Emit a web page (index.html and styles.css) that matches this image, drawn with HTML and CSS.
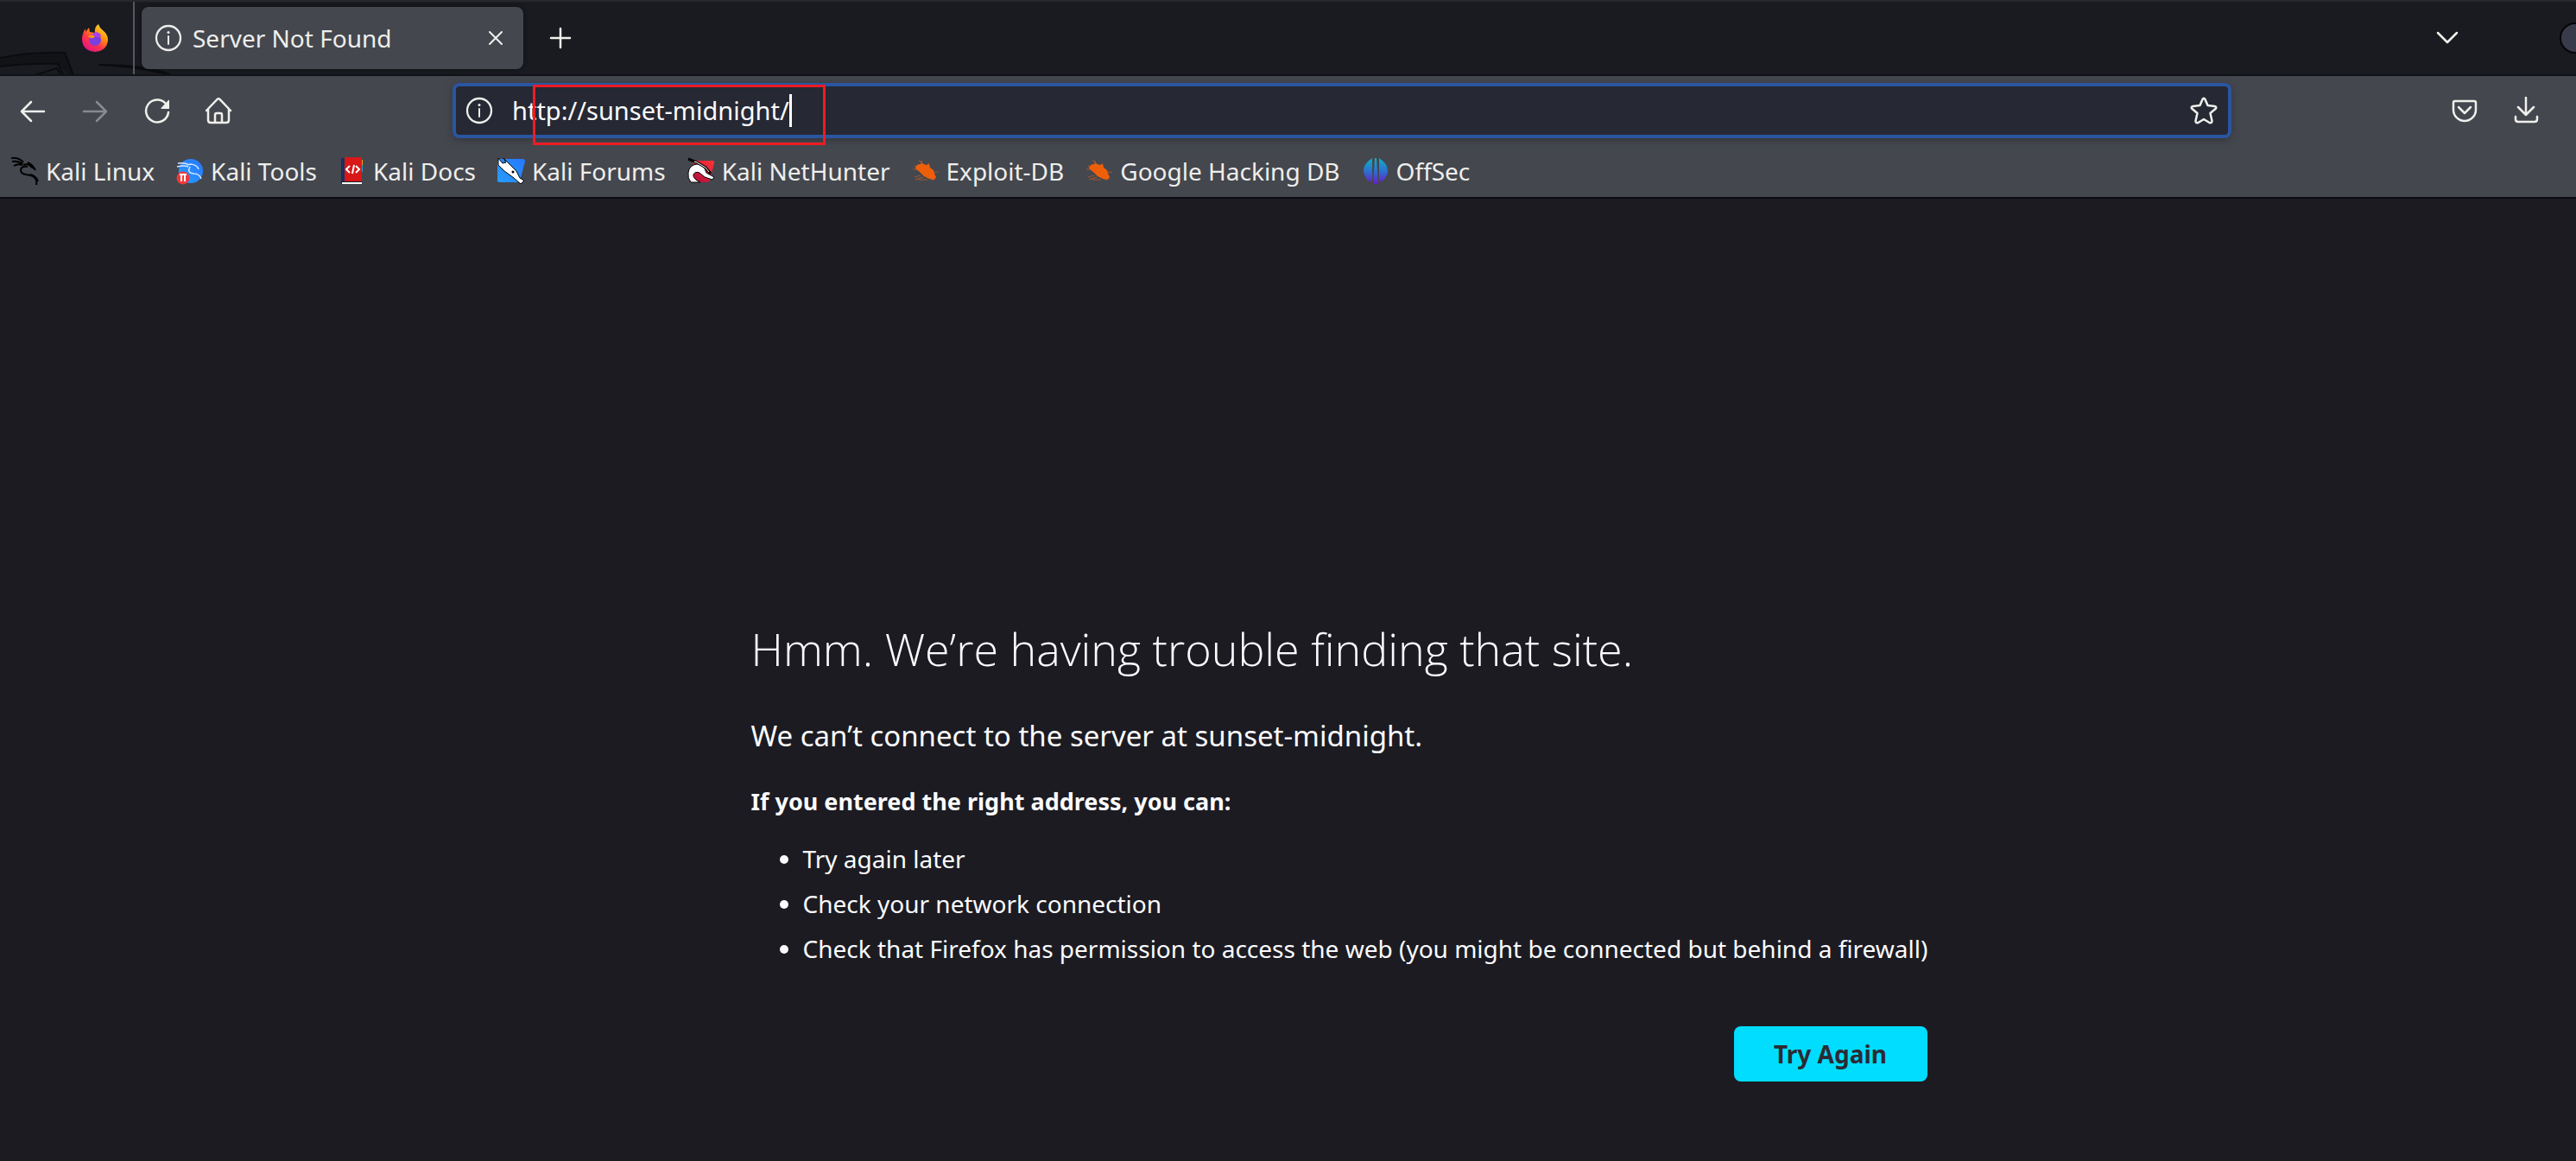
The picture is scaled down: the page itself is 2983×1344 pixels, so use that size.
FILE: index.html
```html
<!DOCTYPE html>
<html lang="en">
<head>
<meta charset="utf-8">
<title>Server Not Found</title>
<link rel="stylesheet" href="styles.css">
</head>
<body>
<svg class="defs" width="0" height="0" aria-hidden="true">
  <defs>
    <linearGradient id="flame" x1="1" y1="0" x2="0.3" y2="1"><stop offset="0" stop-color="#fff44f"/><stop offset=".4" stop-color="#ff980e"/><stop offset=".7" stop-color="#ff3647"/><stop offset="1" stop-color="#e31587"/></linearGradient>
    <linearGradient id="off" x1="0" y1="0" x2="0" y2="1"><stop offset="0" stop-color="#0fb0c8"/><stop offset=".55" stop-color="#2f6bd0"/><stop offset="1" stop-color="#6a1bc4"/></linearGradient>
    <linearGradient id="blue" x1="1" y1="0" x2="0" y2="1"><stop offset="0" stop-color="#2777ff"/><stop offset="1" stop-color="#279dff"/></linearGradient>
    <linearGradient id="red" x1="1" y1="0" x2="0" y2="1"><stop offset="0" stop-color="#ff3535"/><stop offset="1" stop-color="#a8083c"/></linearGradient>
  </defs>
  <symbol id="info" viewBox="0 0 32 32"><circle cx="16" cy="16" r="14" fill="none" stroke="currentColor" stroke-width="2.300"/><path d="M16 14v9" stroke="currentColor" stroke-width="2" stroke-linecap="round"/><circle cx="16" cy="9.500" r="1.500" fill="currentColor"/></symbol>
  <symbol id="bug" viewBox="0 0 32 32"><path d="M8 3l4 5M11 4l1 5M1 14h6M3 23l7-2M4 26l9-3M22 24l2 3M24 18l7-1M19 7l1 4M3 10l4 3M8 26h10" stroke="#a0562f" stroke-width="1.200" fill="none"/><path d="M4 12l2-3 6-2 4 2 4-1 1 4 4 3 1 4 2 4-2 3-6-1-6-3-5-5-4-3z" fill="#ee5f0a"/></symbol>
</svg>
<header class="browser">
  <div class="tabs">
    <svg class="dragon-shade" viewBox="0 0 240 26" aria-hidden="true"><path d="M0 7Q34 0 75 1l11 28H81L67 14Q30 13 0 17z" fill="#121317"/><path d="M0 7Q34 0 75 1l11 28M0 17q36-4 67-3l8 15M40 27l26-8 6 10M114 15q60 0 90 14-40-12-90-14z" fill="none" stroke="#0b0c0f" stroke-width="2"/></svg>
    <div class="brand">
      <svg width="32" height="32" viewBox="0 0 32 32" aria-label="Firefox"><path d="M20 0q1 4 5 7 6 5 6 11Q30 31 16 32 2 31 1 18 1 11 5 5v4l4-5 1 5 6 1q-1-7 4-10z" fill="url(#flame)"/><circle cx="16" cy="18" r="7" fill="#7a3fe0"/><path d="M8 14q4-2 9-1l-3 3q-5 0-6-2z" fill="#ff980e"/><path d="M13 12q5-6 10 1-1 4-7 1z" fill="#a83ff0"/></svg>
    </div>
    <div class="tab">
      <svg class="i32"><use href="#info"/></svg>
      <span class="tab-title">Server Not Found</span>
      <button class="plain" aria-label="Close tab"><svg width="20" height="20" viewBox="0 0 20 20"><path d="M3 3l14 14M17 3L3 17" class="line thin"/></svg></button>
    </div>
    <button class="plain new-tab" aria-label="New tab"><svg width="28" height="28" viewBox="0 0 28 28"><path d="M14 3v22M3 14h22" class="line"/></svg></button>
    <button class="plain list-tabs" aria-label="List all tabs"><svg width="28" height="28" viewBox="0 0 28 28"><path d="M3 8l11 11L25 8" class="line"/></svg></button>
    <span class="window-dot"></span>
  </div>
  <div class="nav">
    <div class="nav-left">
      <button class="plain" aria-label="Back"><svg class="i32" viewBox="0 0 32 32"><path d="M3 17h26M14 6L3 17l11 11" class="line"/></svg></button>
      <button class="plain" aria-label="Forward" disabled><svg class="i32" viewBox="0 0 32 32"><path d="M3 17h26M18 6l11 11-11 11" class="line"/></svg></button>
      <button class="plain" aria-label="Reload"><svg class="i32" viewBox="0 0 32 32"><path d="M29 18A13 13 0 1 1 26 8" class="line"/><path d="M30 4v10H21q-1 0-.500-1L29 4q1-.500 1 0z" fill="currentColor"/></svg></button>
      <button class="plain" aria-label="Home"><svg class="i32" viewBox="0 0 32 32"><path d="M1 16L13.500 3q1.500-1.500 3 0L29 16M3 14v13q0 3 3 3h18q3 0 3-3V14M11 30v-9q0-2 2-2h4q2 0 2 2v9" class="line"/></svg></button>
    </div>
    <div class="urlbar">
      <svg class="i32"><use href="#info"/></svg>
      <input class="url" type="text" aria-label="Address" value="http://sunset-midnight/">
      <span class="caret"></span>
      <button class="plain star" aria-label="Bookmark this page"><svg class="i32" viewBox="0 0 32 32"><path d="M14.500 3q1.500-2.500 3 0l3 7 8 1q3 1 1 3l-6 5 2 9q0 3-3 2L16 26l-6.500 4q-3 1-3-2l2-9-6-5q-2-2 1-3l8-1z" class="line"/></svg></button>
      <span class="highlight"></span>
    </div>
    <div class="nav-right">
      <button class="plain" aria-label="Save to Pocket"><svg class="i32" viewBox="0 0 32 32"><path d="M5 5h22q2 0 2 2v8a13 13 0 0 1-26 0V7q0-2 2-2zM9 12l7 7 7-7" class="line"/></svg></button>
      <button class="plain" aria-label="Downloads"><svg class="i32" viewBox="0 0 32 32"><path d="M15 1v20M6 12l9 9 9-9M3 23v3q0 3 3 3h19q3 0 3-3v-3" class="line"/></svg></button>
    </div>
  </div>
  <nav class="bookmarks">
    <a href="#"><svg class="i32" viewBox="0 0 32 32"><path d="M0 1q9-1 14 5M1 5q7-1 12 3M3 10q5-3 10-1M19 6q6 3 9 9M14 9q6-2 9 2l5 3" fill="none" stroke="#000" stroke-width="2"/><path d="M19 11q-8-1-8 4 0 4 6 5 9 1 11 5 2 3 1 7M22 20q7 2 9 8" fill="none" stroke="#000" stroke-width="2"/></svg>Kali Linux</a>
    <a href="#"><svg class="i32" viewBox="0 0 32 32"><circle cx="17" cy="16" r="14" fill="url(#blue)"/><path d="M2 7q8-1 13 2M1 11q8-2 13 0M15 8q9 0 11 6M16 11q-4 7 4 8 7 0 9 6" fill="none" stroke="#d9e7ff" stroke-width="1.500"/><circle cx="8" cy="24" r="7.500" fill="#f03a3a"/><path d="M4 20h8M6 20v8M10 20v8" stroke="#fff" stroke-width="2"/></svg>Kali Tools</a>
    <a href="#"><svg class="i32" viewBox="0 0 32 32"><path d="M3 1h4v27H3z" fill="#17305f"/><path d="M7 0h20v28H7z" fill="#d81818"/><path d="M27 3h1v6h-1z" fill="#e9a11b"/><path d="M27 9h1v8h-1z" fill="#2b9dcc"/><path d="M3 28h24v3H3z" fill="#111c30"/><path d="M4 30h23" stroke="#fff" stroke-width="2"/><path d="M13 10l-4 4 4 4M20 10l4 4-4 4M18 9l-2 10" fill="none" stroke="#fff" stroke-width="2"/></svg>Kali Docs</a>
    <a href="#"><svg class="i32" viewBox="0 0 32 32"><path d="M2 2h28q2 0 2 3l-6 22q-1 2-3 2H2q-2 0-2-2V5z" fill="url(#blue)"/><path d="M1 1l5 6 4-1-3-5 10 10 5 5 4 8 5 3-4 4-8-7-11-8-7-7z" fill="#fff" stroke="#000"/><circle cx="18" cy="17" r="1.500"/></svg>Kali Forums</a>
    <a href="#"><svg class="i32" viewBox="0 0 32 32"><path d="M9 4h20q3 0 2 3l-5 20q-1 2-3 2H4q-3 0-2-3l5-20z" fill="url(#red)"/><path d="M4 29Q0 24 1 18 2 9 11 8q6 0 9 5l2 5 9 5-2 3-9-3-6-5q-5-2-7 2-1 5 8 9z" fill="#fff" stroke="#000"/><path d="M1 2l10 4 10 6 6 7" stroke="#000" stroke-width="3" fill="none"/><path d="M8 5l3 1 10 6 4 5" stroke="#fff" fill="none"/></svg>Kali NetHunter</a>
    <a href="#"><svg class="i32"><use href="#bug"/></svg>Exploit-DB</a>
    <a href="#"><svg class="i32"><use href="#bug"/></svg>Google Hacking DB</a>
    <a href="#"><svg class="i32" viewBox="0 0 32 32"><path d="M12 1v27l-5-1Q-5 12 12 1zM20 1v27l5-1Q37 12 20 1zM15 1h2l2 30h-6z" fill="url(#off)"/></svg>OffSec</a>
  </nav>
</header>
<main class="page">
  <div class="error">
    <h1>Hmm. We’re having trouble finding that site.</h1>
    <p class="lead">We can’t connect to the server at sunset-midnight.</p>
    <p class="hint">If you entered the right address, you can:</p>
    <ul>
      <li>Try again later</li>
      <li>Check your network connection</li>
      <li>Check that Firefox has permission to access the web (you might be connected but behind a firewall)</li>
    </ul>
    <div class="actions"><button class="primary">Try Again</button></div>
  </div>
</main>
</body>
</html>
```

FILE: styles.css
```css
* { box-sizing: border-box; }
body {
  margin: 0;
  overflow-x: hidden;
  background: #1c1b22;
  color: #fbfbfe;
  font: 28px/40px "Noto Sans", "Open Sans", sans-serif;
}
.defs { position: absolute; }
.i32 { width: 32px; height: 32px; flex: none; display: block; }
.line { fill: none; stroke: currentColor; stroke-width: 2.5; stroke-linecap: round; stroke-linejoin: round; }
.thin { stroke-width: 2; }
.plain { display: block; padding: 0; border: 0; background: none; color: #f0f0ec; }
.plain svg { display: block; }
.plain:disabled { opacity: .4; }

.browser { color: #eeeeec; border-bottom: 2px solid #0c0c12; background: #44474e; }
.tabs {
  position: relative;
  display: flex;
  align-items: center;
  height: 88px;
  overflow: hidden;
  background: #1a1b20;
  border-top: 2px solid #26282e;
  border-bottom: 2px solid #111216;
}
.dragon-shade { position: absolute; left: 0; bottom: 0; width: 240px; height: 26px; }
.brand {
  position: relative;
  display: flex;
  align-items: center;
  justify-content: flex-end;
  width: 156px;
  height: 100%;
  padding-right: 28px;
  border-right: 2px solid #55575c;
}
.tab {
  position: relative;
  display: flex;
  align-items: center;
  gap: 12px;
  width: 442px;
  height: 72px;
  margin-left: 8px;
  padding: 0 22px 0 15px;
  border-radius: 8px;
  background: #44474e;
  box-shadow: 0 0 4px #0c0d10;
}
.tab-title { flex: 1; }
.new-tab { margin-left: 29px; }
.list-tabs { margin-left: auto; margin-right: 116px; }
.window-dot {
  flex: none;
  width: 36px;
  height: 36px;
  margin-right: -17px;
  border: 2px solid #050506;
  border-radius: 50%;
  background: #383c4a;
}

.nav { display: flex; align-items: flex-start; padding-top: 8px; }
.nav-left, .nav-right { display: flex; align-items: center; height: 64px; }
.nav-left { flex: 0 0 524px; gap: 40px; padding-left: 22px; }
.nav-right { flex: 0 0 399px; justify-content: flex-end; gap: 40px; padding-right: 41px; }
.urlbar {
  position: relative;
  flex: 1;
  display: flex;
  align-items: center;
  height: 64px;
  padding: 0 12px 0 11px;
  border: 4px solid #2a55a0;
  border-radius: 8px;
  background: #262833;
  box-shadow: 0 2px 8px #33353a;
}
.url {
  field-sizing: content;
  margin-left: 22px;
  padding: 0;
  border: 0;
  outline: 0;
  background: none;
  color: #fbfbfe;
  font: inherit;
  font-size: 29px;
}
.caret { width: 3px; height: 38px; background: #fff; }
.star { margin-left: auto; }
.highlight {
  position: absolute;
  left: 89px;
  top: -2px;
  width: 339px;
  height: 70px;
  border: 3px solid #ee1c24;
}

.bookmarks { display: flex; gap: 25px; padding: 18px 14px 10px 13px; }
.bookmarks a { display: flex; align-items: center; gap: 8px; color: inherit; text-decoration: none; white-space: nowrap; }

.error { max-width: 1480px; margin: 0 auto; padding: 485px 0 48px 118px; }
h1 { margin: 0; font: 300 52px/72px "Open Sans", "Noto Sans", sans-serif; }
.lead { margin: 43px 0 0; font-size: 33px; line-height: 44px; }
.hint { margin: 34px 0 0; font-size: 27px; font-weight: 700; }
ul { margin: 20px 0 0; padding-left: 60px; line-height: 52px; white-space: nowrap; }
.actions { display: flex; justify-content: flex-end; margin-top: 64px; }
.primary {
  width: 224px;
  height: 64px;
  border: 0;
  border-radius: 8px;
  background: #00ddff;
  color: #2b2a33;
  font: inherit;
  font-weight: 700;
}
```
